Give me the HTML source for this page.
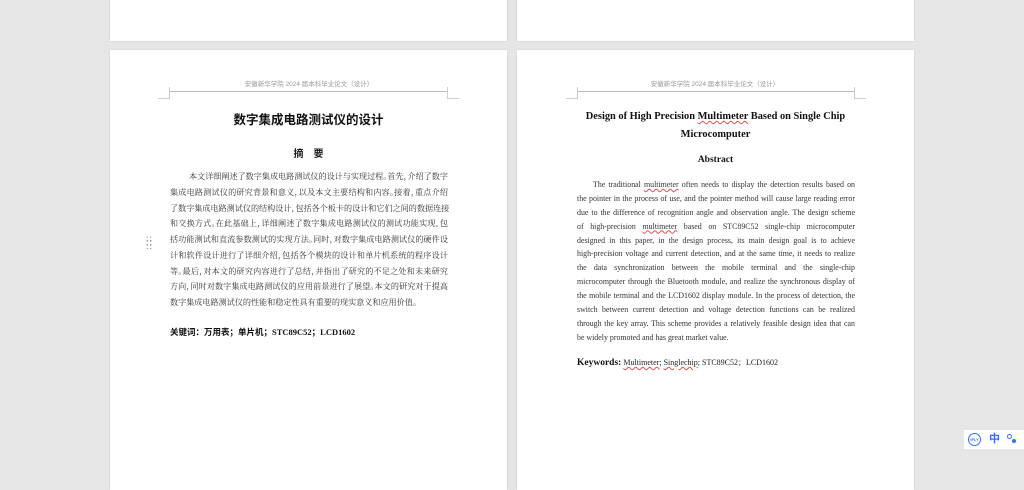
<!DOCTYPE html>
<html><head><meta charset="utf-8"><style>
body{margin:0;width:1024px;height:483px;background:#e6e6e6;position:relative;overflow:hidden;font-family:"Liberation Serif","Noto Serif CJK SC",serif;color:#222}
.pg{position:absolute;background:#fff;box-shadow:0 0 2px rgba(0,0,0,.12)}
.a{position:absolute}
.hd{position:absolute;font-family:"Liberation Sans","Noto Sans CJK SC",sans-serif;font-size:6.5px;color:#999;white-space:nowrap;transform:translateX(-50%)}
.ln{position:absolute;background:#bbb}
.cz div{font-size:8.1px;line-height:15.75px;height:15.75px;text-align:justify;text-align-last:justify;color:#333;white-space:nowrap;font-feature-settings:"halt"}
.en div{font-size:7.9px;line-height:13.9px;height:13.9px;text-align:justify;text-align-last:justify;color:#333;white-space:nowrap}
.cz div.l,.en div.l{text-align-last:left}
u{text-decoration:underline wavy #e05050;text-decoration-thickness:0.5px}
</style></head><body>
<div class="pg" style="left:110px;top:-5px;width:397px;height:46px"></div>
<div class="pg" style="left:517px;top:-5px;width:397px;height:46px"></div>
<div class="pg" style="left:110px;top:50px;width:397px;height:440px"></div>
<div class="pg" style="left:517px;top:50px;width:397px;height:440px"></div>

<div class="hd" style="left:309px;top:78px">安徽新华学院 2024 届本科毕业论文（设计）</div>
<div class="ln" style="left:169px;top:91px;width:278px;height:1px"></div>
<div class="ln" style="left:169px;top:87px;width:1px;height:11px;background:#ccc"></div>
<div class="ln" style="left:158px;top:98px;width:12px;height:1px;background:#ccc"></div>
<div class="ln" style="left:447px;top:87px;width:1px;height:11px;background:#ccc"></div>
<div class="ln" style="left:447px;top:98px;width:12px;height:1px;background:#ccc"></div>
<div class="a" style="left:110px;width:397px;top:109px;text-align:center;font-family:'Liberation Sans','Noto Sans CJK SC',sans-serif;font-weight:bold;font-size:12.5px;color:#111">数字集成电路测试仪的设计</div>
<div class="a" style="left:110px;width:397px;top:145px;text-align:center;font-family:'Liberation Sans','Noto Sans CJK SC',sans-serif;font-weight:bold;font-size:10px;letter-spacing:10px;padding-left:10px;box-sizing:border-box;color:#222">摘要</div>
<div class="a cz" style="left:170px;width:278px;top:169px">
<div style="padding-left:19px">本文详细阐述了数字集成电路测试仪的设计与实现过程。首先，介绍了数字</div>
<div>集成电路测试仪的研究背景和意义，以及本文主要结构和内容。接着，重点介绍</div>
<div>了数字集成电路测试仪的结构设计，包括各个板卡的设计和它们之间的数据连接</div>
<div>和交换方式。在此基础上，详细阐述了数字集成电路测试仪的测试功能实现，包</div>
<div>括功能测试和直流参数测试的实现方法。同时，对数字集成电路测试仪的硬件设</div>
<div>计和软件设计进行了详细介绍，包括各个模块的设计和单片机系统的程序设计</div>
<div>等。最后，对本文的研究内容进行了总结，并指出了研究的不足之处和未来研究</div>
<div>方向，同时对数字集成电路测试仪的应用前景进行了展望。本文的研究对于提高</div>
<div class="l">数字集成电路测试仪的性能和稳定性具有重要的现实意义和应用价值。</div>
</div>
<div class="a" style="left:170px;top:326px;font-size:8.5px;font-weight:bold;color:#111;font-family:'Liberation Serif','Noto Sans CJK SC',serif">关键词：万用表；单片机；STC89C52；LCD1602</div>
<div class="a" style="left:146px;top:236px;font-size:9px;color:#777;line-height:4px;letter-spacing:1px">::<br>::<br>::</div>

<div class="hd" style="left:715px;top:78px">安徽新华学院 2024 届本科毕业论文（设计）</div>
<div class="ln" style="left:577px;top:91px;width:278px;height:1px"></div>
<div class="ln" style="left:577px;top:87px;width:1px;height:11px;background:#ccc"></div>
<div class="ln" style="left:566px;top:98px;width:12px;height:1px;background:#ccc"></div>
<div class="ln" style="left:854px;top:87px;width:1px;height:11px;background:#ccc"></div>
<div class="ln" style="left:854px;top:98px;width:12px;height:1px;background:#ccc"></div>
<div class="a" style="left:517px;width:397px;top:108px;text-align:center;font-weight:bold;font-size:10.4px;line-height:17.5px;color:#111">Design of High Precision <u>Multimeter</u> Based on Single Chip<br>Microcomputer</div>
<div class="a" style="left:517px;width:397px;top:155px;text-align:center;font-weight:bold;font-size:9.5px;color:#111">Abstract</div>
<div class="a en" style="left:577px;width:278px;top:178px">
<div style="padding-left:16px">The traditional <u>multimeter</u> often needs to display the detection results based on</div>
<div>the pointer in the process of use, and the pointer method will cause large reading error</div>
<div>due to the difference of recognition angle and observation angle. The design scheme</div>
<div>of high-precision <u>multimeter</u> based on STC89C52 single-chip microcomputer</div>
<div>designed in this paper, in the design process, its main design goal is to achieve</div>
<div>high-precision voltage and current detection, and at the same time, it needs to realize</div>
<div>the data synchronization between the mobile terminal and the single-chip</div>
<div>microcomputer through the Bluetooth module, and realize the synchronous display of</div>
<div>the mobile terminal and the LCD1602 display module. In the process of detection, the</div>
<div>switch between current detection and voltage detection functions can be realized</div>
<div>through the key array. This scheme provides a relatively feasible design idea that can</div>
<div class="l">be widely promoted and has great market value.</div>
</div>
<div class="a" style="left:577px;top:357px;font-size:8px;color:#222;white-space:nowrap"><b style="font-size:9.5px;color:#111">Keywords:</b> <u>Multimeter</u>; <u>Singlechip</u>; STC89C52；LCD1602</div>

<div class="a" style="left:964px;top:430px;width:60px;height:19px;background:#fff"></div>
<div class="a" style="left:968px;top:433px;width:11px;height:11px;border:1.3px solid #3a6ee8;border-radius:50%;font-size:4px;color:#3a6ee8;text-align:center;line-height:11px;font-family:'Liberation Sans',sans-serif;font-weight:bold">IFLY</div>
<div class="a" style="left:989px;top:432px;font-size:11px;color:#3a6ee8;font-family:'Noto Sans CJK SC',sans-serif;line-height:13px;font-weight:bold">中</div>
<div class="a" style="left:1007px;top:434px;width:3px;height:3px;border:1px solid #3a6ee8;border-radius:50%"></div>
<div class="a" style="left:1012px;top:439px;width:4px;height:4px;background:#3a6ee8;border-radius:50%"></div>
</body></html>
